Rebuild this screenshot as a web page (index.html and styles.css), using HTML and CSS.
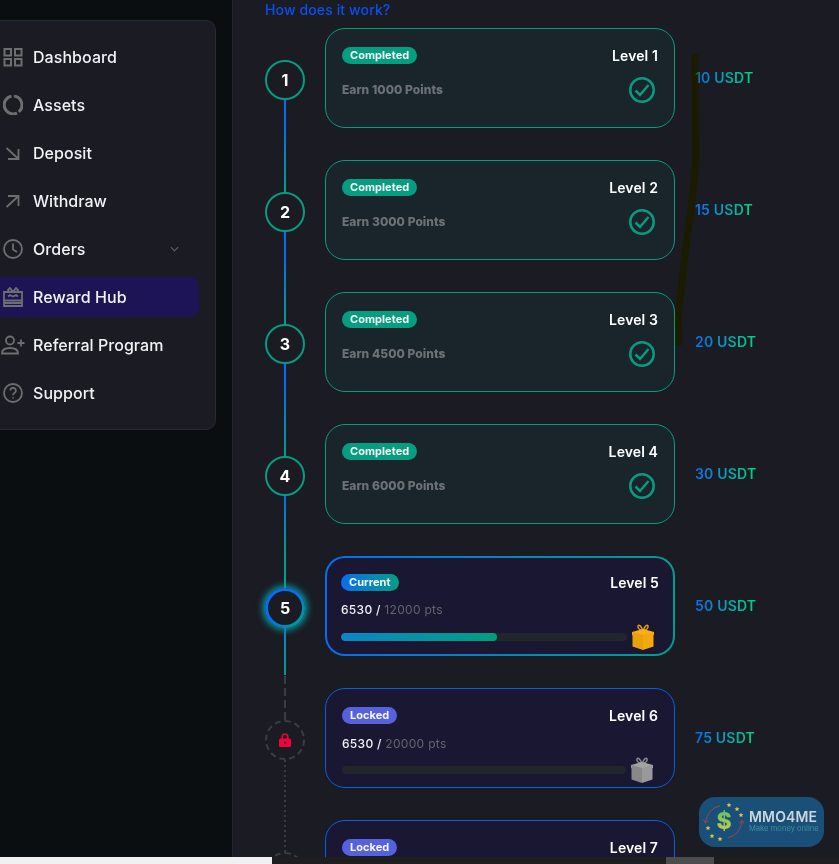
FILE: index.html
```html
<!DOCTYPE html>
<html lang="en">
<head>
<meta charset="utf-8">
<title>Reward Hub</title>
<link rel="stylesheet" href="styles.css">
</head>
<body>
<div class="app">
  <aside class="side">
    <nav class="panel">
      <a class="item"><svg class="ico ico-grid" viewBox="0 0 20 20"><path d="M1.500 2h6.500v6.500h-6.500zM12 2h6.500v6.500h-6.500zM1.500 12h6.500v6.500h-6.500zM12 12h6.500v6.500h-6.500z"/></svg>Dashboard</a>
      <a class="item"><svg class="ico ico-thick" viewBox="0 0 20 20"><path d="M11 1.100a9 9 0 0 1 4.800 15.800M14 18.100A9 9 0 1 1 8.500 1.100"/></svg>Assets</a>
      <a class="item"><svg class="ico" viewBox="0 0 20 20"><path d="M3.500 5L15 15.500M15.500 6v10H5"/></svg>Deposit</a>
      <a class="item"><svg class="ico" viewBox="0 0 20 20"><path d="M3.500 16L15 5.500M5 5h10.500v10"/></svg>Withdraw</a>
      <a class="item"><svg class="ico" viewBox="0 0 20 20"><circle cx="10" cy="10" r="9"/><path d="M10 4.500V10.500l4 2.500"/></svg>Orders<svg class="chev" viewBox="0 0 10 6"><path d="M1 1l4 4 4-4"/></svg></a>
      <a class="item active"><svg class="ico" viewBox="0 0 20 20"><path d="M1 5h18v14H1zM1 13.500h18M1 16h18M5 9.500l2-1.500 3 1.500 3-1.500 2 1.500M10 5l-3-4-2 2 1 2M10 5l3-4 2 2-1 2"/></svg>Reward Hub</a>
      <a class="item"><svg class="ico ico-wide" viewBox="0 0 24 20"><circle cx="9" cy="5.500" r="4"/><path d="M1 18.500c0-4 3.500-5.500 8-5.500s8 1.500 8 5.500zM20 4.500v7M16.500 8h7"/></svg>Referral Program</a>
      <a class="item"><svg class="ico" viewBox="0 0 20 20"><circle cx="10" cy="10" r="9"/><path d="M7.300 7.500a2.800 2.800 0 1 1 4.200 2.500c-1 .6-1.500 1-1.500 2.300M10 14.200v1.300"/></svg>Support</a>
    </nav>
  </aside>

  <main class="main">
    <a class="how">How does it work?</a>
    <div class="track">

      <section class="row">
        <div class="rail"><div class="node done">1</div><div class="line"></div></div>
        <div class="card card-done">
          <div class="top"><span class="badge b-done">Completed</span><span class="level">Level 1</span></div>
          <div class="mid"><span class="earn">Earn 1000 Points</span><svg class="check" viewBox="0 0 26 26"><circle cx="13" cy="13" r="11.750"/><path d="M6.500 13.500l4.500 4.500 8.500-10"/></svg></div>
        </div>
        <div class="prize"><span class="usdt">10 USDT</span></div>
      </section>

      <section class="row">
        <div class="rail"><div class="node done">2</div><div class="line"></div></div>
        <div class="card card-done">
          <div class="top"><span class="badge b-done">Completed</span><span class="level">Level 2</span></div>
          <div class="mid"><span class="earn">Earn 3000 Points</span><svg class="check" viewBox="0 0 26 26"><circle cx="13" cy="13" r="11.750"/><path d="M6.500 13.500l4.500 4.500 8.500-10"/></svg></div>
        </div>
        <div class="prize"><span class="usdt">15 USDT</span></div>
      </section>

      <section class="row">
        <div class="rail"><div class="node done">3</div><div class="line"></div></div>
        <div class="card card-done">
          <div class="top"><span class="badge b-done">Completed</span><span class="level">Level 3</span></div>
          <div class="mid"><span class="earn">Earn 4500 Points</span><svg class="check" viewBox="0 0 26 26"><circle cx="13" cy="13" r="11.750"/><path d="M6.500 13.500l4.500 4.500 8.500-10"/></svg></div>
        </div>
        <div class="prize"><span class="usdt">20 USDT</span></div>
      </section>

      <section class="row">
        <div class="rail"><div class="node done">4</div><div class="line line-teal"></div></div>
        <div class="card card-done">
          <div class="top"><span class="badge b-done">Completed</span><span class="level">Level 4</span></div>
          <div class="mid"><span class="earn">Earn 6000 Points</span><svg class="check" viewBox="0 0 26 26"><circle cx="13" cy="13" r="11.750"/><path d="M6.500 13.500l4.500 4.500 8.500-10"/></svg></div>
        </div>
        <div class="prize"><span class="usdt">30 USDT</span></div>
      </section>

      <section class="row">
        <div class="rail"><div class="node now"><span class="node-num">5</span></div><div class="line line-half"></div></div>
        <div class="card card-now">
          <div class="top"><span class="badge b-now">Current</span><span class="level">Level 5</span></div>
          <div class="pts"><b>6530 /</b> 12000 pts</div>
          <div class="prog">
            <div class="bar"><div class="fill" style="width:54.5%"></div></div>
            <svg class="gift" viewBox="0 0 24 26"><path class="g-bow" d="M12 7C9 6 6.500 4 7 2c.5-1.500 3-1 5 5 2-6 4.500-6.500 5-5 .5 2-2 4-5 5z"/><path class="g-lid" d="M1 8l11-3 11 3v3l-11 3-11-3z"/><path class="g-l" d="M1.500 8l10.500 3v15l-10.500-3.500z"/><path class="g-r" d="M22.500 8L12 11v15l10.500-3.500z"/></svg>
          </div>
        </div>
        <div class="prize"><span class="usdt">50 USDT</span></div>
      </section>

      <section class="row">
        <div class="rail"><div class="node lock"><svg class="pad" viewBox="0 0 12 14"><path class="shackle" d="M3.200 6V3.800a2.800 2.800 0 0 1 5.600 0V6"/><rect y="5.500" width="12" height="8.500" rx="1.500"/><circle class="hole" cx="6" cy="9.700" r="1"/></svg></div><div class="line line-dots"></div></div>
        <div class="card card-lock">
          <div class="top"><span class="badge b-lock">Locked</span><span class="level">Level 6</span></div>
          <div class="pts pts-lock"><b>6530 /</b> 20000 pts</div>
          <div class="prog prog-lock">
            <div class="bar"></div>
            <svg class="gift gift-off" viewBox="0 0 24 26"><path class="g-bow" d="M12 7C9 6 6.500 4 7 2c.5-1.500 3-1 5 5 2-6 4.500-6.500 5-5 .5 2-2 4-5 5z"/><path class="g-lid" d="M1 8l11-3 11 3v3l-11 3-11-3z"/><path class="g-l" d="M1.500 8l10.500 3v15l-10.500-3.500z"/><path class="g-r" d="M22.500 8L12 11v15l10.500-3.500z"/></svg>
          </div>
        </div>
        <div class="prize"><span class="usdt">75 USDT</span></div>
      </section>

      <section class="row">
        <div class="rail"><div class="node lock"></div></div>
        <div class="card card-lock">
          <div class="top"><span class="badge b-lock">Locked</span><span class="level">Level 7</span></div>
        </div>
      </section>
    </div>

    <svg class="scribble" viewBox="0 0 30 291"><path d="M20 0L20.500 50 21 106 16 156 11 191 6 236 3 264 4 291"/></svg>

    <div class="brand">
      <svg class="brand-mark" viewBox="0 0 42 42">
        <defs>
          <linearGradient id="dollar-fill" x1="0" y1="0" x2="0" y2="1"><stop offset="0" stop-color="#4fbf6a"/><stop offset="1" stop-color="#d6cf45"/></linearGradient>
          <path id="star" d="M0-2.400L.7-.8 2.400-.7 1.100.4 1.500 2.100 0 1.200-1.500 2.100-1.100.4-2.400-.7-.7-.8z"/>
        </defs>
        <path class="arc-red" d="M17 5C9 6.500 3.500 13 2.500 22M.5 18.500l2 3.500 3-2.500"/>
        <path class="arc-red" d="M25 36.500c8-1.500 13-8 14-16.500M36.500 22.500l2.500-3.500 2 3.500"/>
        <g class="stars">
          <use href="#star" x="26" y="4"/><use href="#star" x="34" y="8"/><use href="#star" x="38" y="14"/><use href="#star" x="5" y="27"/><use href="#star" x="9" y="35"/><use href="#star" x="17" y="38"/>
        </g>
        <text class="dollar" x="21" y="28" fill="url(#dollar-fill)">$</text>
      </svg>
      <div class="brand-text"><div class="brand-name">MMO4ME</div><div class="brand-sub">Make money online</div></div>
    </div>
  </main>
</div>
<div class="hbar"><div class="hbar-white"></div><div class="hbar-track"><div class="hbar-thumb"></div></div></div>
</body>
</html>
```
FILE: styles.css
```css
* { box-sizing: border-box; }
html, body { margin: 0; height: 100%; overflow: hidden; }
body {
  background: #0b0e11;
  color: #fff;
  font-family: Inter, "Liberation Sans", sans-serif;
  display: flex;
  flex-direction: column;
}
.app { flex: 1; min-height: 0; display: flex; overflow: hidden; }

/* sidebar */
.side { width: 232px; flex: none; padding: 20px 16px 0 0; }
.panel {
  height: 410px;
  background: #1a1b23;
  border: 1px solid #272838;
  border-left: 0;
  border-radius: 0 10px 10px 0;
  padding: 16px 16px 16px 0;
  display: flex;
  flex-direction: column;
  gap: 8px;
}
.item {
  height: 40px;
  display: flex;
  align-items: center;
  padding-left: 3px;
  font-size: 16px;
  font-weight: 500;
  letter-spacing: .05px;
  color: #f2f2f5;
  border-radius: 0 8px 8px 0;
}
.item.active { background: #1c1454; }
.ico {
  width: 20px;
  height: 20px;
  margin-right: 10px;
  flex: none;
  fill: none;
  stroke: #6e6e70;
  stroke-width: 1.800;
}
.ico-grid { stroke-width: 2; }
.ico-thick { stroke-width: 3; }
.ico-wide { width: 24px; margin: 0 8px 0 -2px; }
.chev { width: 9px; height: 6px; margin-left: 84px; fill: none; stroke: #5c5d63; stroke-width: 1.300; }

/* main column */
.main {
  flex: 1;
  min-width: 0;
  position: relative;
  background: #1a1b23;
  border-left: 1px solid #23243a;
  padding-left: 32px;
  overflow: hidden;
}
.how {
  display: block;
  height: 19px;
  padding-top: 1px;
  line-height: 18px;
  font-size: 14px;
  font-weight: 500;
  letter-spacing: .12px;
  color: #0a50f0;
}
.track { padding-top: 9px; }
.row { display: flex; align-items: flex-start; height: 132px; }
.rail {
  width: 40px;
  flex: none;
  padding-top: 32px;
  display: flex;
  flex-direction: column;
  align-items: center;
}
.node {
  width: 40px;
  height: 40px;
  flex: none;
  border-radius: 50%;
  display: flex;
  align-items: center;
  justify-content: center;
  font-size: 16px;
  font-weight: 700;
  background: #1a1b23;
}
.node.done { border: 2px solid #079c80; }
.node.now {
  padding: 3px;
  background: linear-gradient(135deg, #0a6cf0 45%, #00a583);
  box-shadow: 0 0 7px 2px #04a5a5;
}
.node-num {
  width: 100%;
  height: 100%;
  border-radius: 50%;
  background: #1a1b23;
  display: flex;
  align-items: center;
  justify-content: center;
}
.node.lock { border: 2px dashed #3b3c45; }
.pad { width: 12px; height: 14px; fill: #f5003d; }
.shackle { fill: none; stroke: #f5003d; stroke-width: 1.500; }
.hole { fill: #1a1b23; }
.line {
  width: 2px;
  height: 92px;
  margin-bottom: -32px;
  flex: none;
  background: linear-gradient(180deg, #0a6cf0 25%, #049d8c);
}
.line-teal { background: linear-gradient(180deg, #0a6cf0 0, #049d8c 60%); }
.line-half {
  background:
    linear-gradient(180deg, #0a7fd0, #049d8c 47px, transparent 47px),
    repeating-linear-gradient(180deg, #3b3c45 0 8px, transparent 8px 12px);
}
.line-dots { background: repeating-linear-gradient(180deg, #3b3c45 0 2px, transparent 2px 5px); }

/* cards */
.card {
  width: 350px;
  height: 100px;
  flex: none;
  margin-left: 20px;
  border-radius: 20px;
  padding: 16px 16px 0;
}
.card-done { background: #1a252b; border: 1px solid #079c80; }
.card-lock { background: #1a1733; border: 1px solid #0a5fe0; }
.card-now {
  padding: 14px 14px 0;
  border: 2px solid transparent;
  background: linear-gradient(#1a1733, #1a1733) padding-box, linear-gradient(90deg, #0a6cf0, #049d8c) border-box;
}
.top { display: flex; justify-content: space-between; align-items: center; height: 20px; }
.badge {
  height: 17px;
  padding: 0 8px;
  border-radius: 9px;
  font-size: 11px;
  line-height: 17px;
  font-weight: 700;
  letter-spacing: .05px;
  color: #f6f6f6;
}
.b-done { background: #069e80; }
.b-now { background: linear-gradient(90deg, #0a6cf0, #069e80); }
.b-lock { background: #5661de; }
.level { font-size: 14px; font-weight: 600; letter-spacing: .1px; color: #fff; }
.mid { display: flex; justify-content: space-between; align-items: center; margin-top: 12px; }
.earn { font-size: 12px; font-weight: 800; letter-spacing: .05px; color: #6d7276; margin-top: -2px; }
.check { width: 26px; height: 26px; margin-right: 3px; fill: none; stroke: #079c80; stroke-width: 2.500; }
.pts { margin-top: 9px; height: 18px; line-height: 18px; font-size: 12px; letter-spacing: .3px; color: #64646c; }
.pts-lock { margin-top: 10px; }
.pts b { font-weight: 500; color: #f2f2f5; }
.prog { display: flex; align-items: center; height: 26px; margin-top: 5px; padding-right: 4px; }
.prog-lock { margin-top: 4px; }
.bar { flex: 1; height: 8px; border-radius: 4px; background: #22252b; overflow: hidden; }
.fill { height: 100%; border-radius: 4px; background: linear-gradient(90deg, #0a86c8, #049d80); }
.gift { width: 24px; height: 26px; flex: none; margin-left: 4px; }
.g-bow { fill: none; stroke: #e09b12; stroke-width: 1.500; }
.g-lid { fill: #f8b018; }
.g-l { fill: #e8a10c; }
.g-r { fill: #f2a80e; }
.gift-off .g-bow { stroke: #8a8a8a; }
.gift-off .g-lid { fill: #a3a3a3; }
.gift-off .g-l { fill: #888; }
.gift-off .g-r { fill: #999; }

.prize { margin: 40px 0 0 20px; height: 18px; line-height: 18px; }
.usdt {
  font-size: 14px;
  font-weight: 600;
  letter-spacing: .2px;
  background: linear-gradient(90deg, #0a6cf0, #00d67c);
  -webkit-background-clip: text;
  background-clip: text;
  color: transparent;
}

/* overlays */
.scribble {
  position: absolute;
  left: 442px;
  top: 54px;
  width: 30px;
  height: 291px;
  mix-blend-mode: multiply;
  overflow: visible;
}
.scribble path { fill: none; stroke: #ffff00; stroke-width: 7; }
.brand {
  position: absolute;
  left: 466px;
  top: 797px;
  width: 125px;
  height: 50px;
  background: #1a5078;
  border-radius: 16px;
  display: flex;
  align-items: center;
  padding-left: 4px;
}
.brand-mark { width: 42px; height: 42px; flex: none; }
.arc-red { fill: none; stroke: #a8404f; stroke-width: 1; }
.stars { fill: #e3c54e; }
.dollar { font-size: 23px; font-weight: 800; text-anchor: middle; font-family: Inter, sans-serif; }
.brand-text { margin-left: 4px; white-space: nowrap; }
.brand-name { font-size: 14px; line-height: 14px; font-weight: 600; color: #ccd6dc; letter-spacing: .15px; }
.brand-sub { font-size: 7.600px; line-height: 10px; color: #3f8f9d; }

/* bottom scroll strip */
.hbar { height: 7px; flex: none; display: flex; }
.hbar-white { width: 272px; flex: none; background: #f0f0f0; }
.hbar-track { flex: 1; background: #1e1e1e; padding-left: 394px; }
.hbar-thumb { width: 48px; height: 100%; background: #4c4c4c; }
```
